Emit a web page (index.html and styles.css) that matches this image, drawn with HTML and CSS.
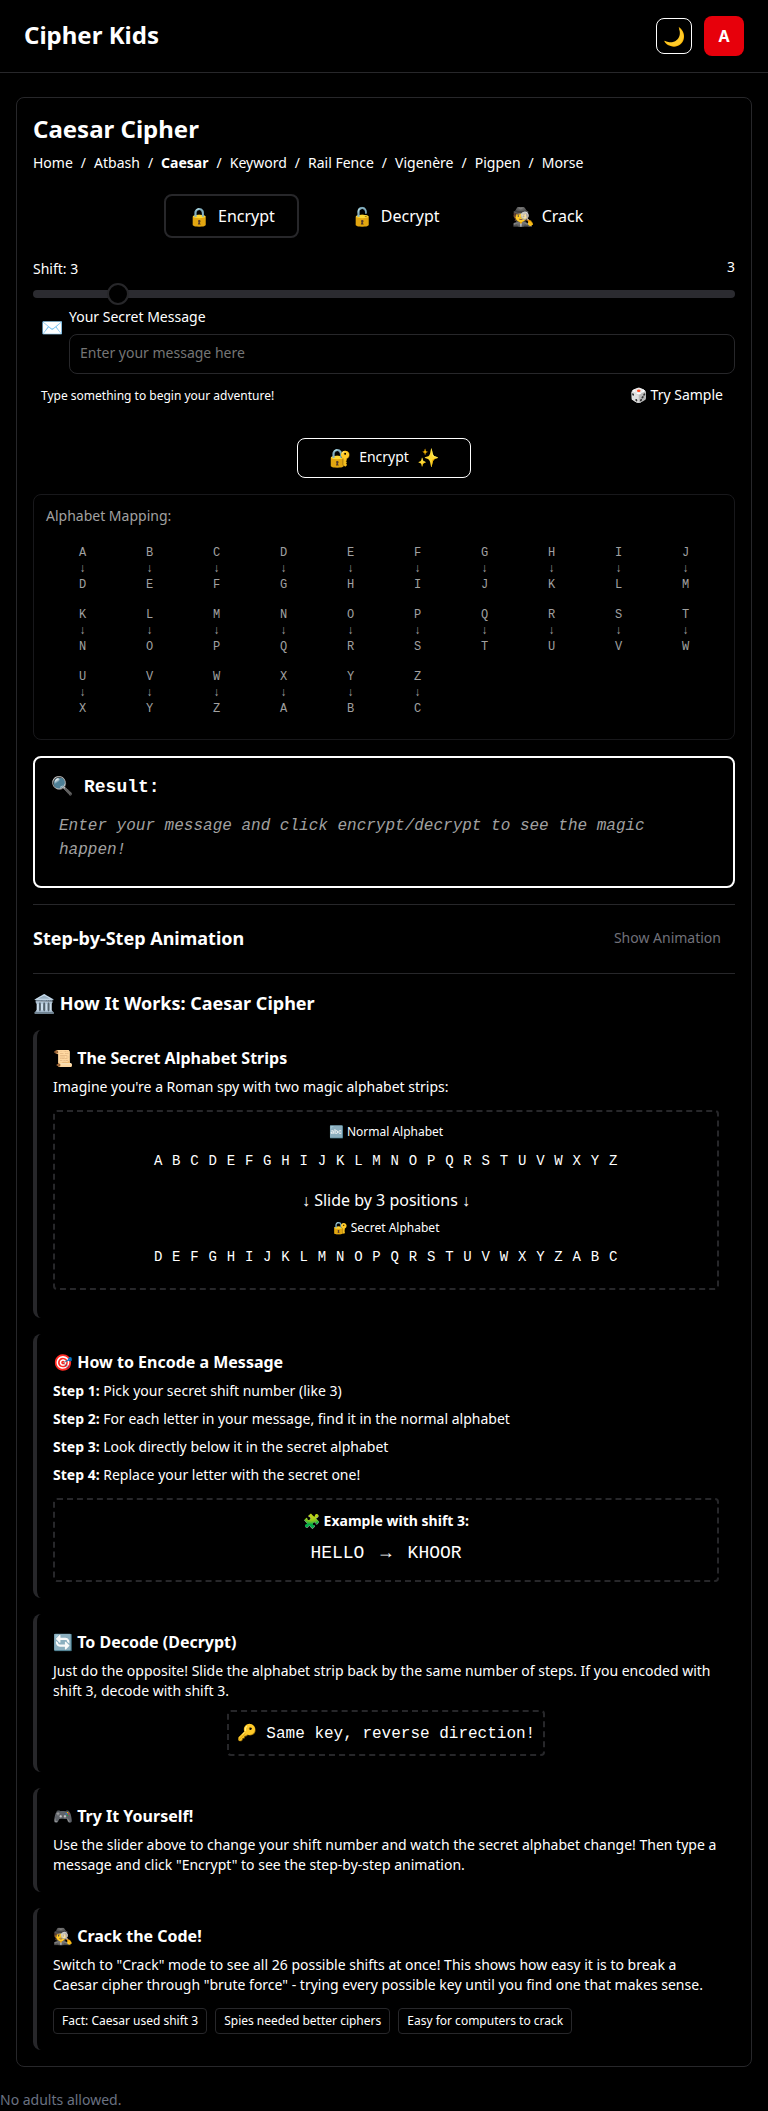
FILE: index.html
```html
<!DOCTYPE html>
<html lang="en">
<head>
<meta charset="utf-8">
<title>Cipher Kids</title>
<link rel="stylesheet" href="styles.css">
</head>
<body>
<header class="topbar">
  <div class="brand">Cipher Kids</div>
  <div class="topbar-actions">
    <button class="theme-toggle">🌙</button>
    <button class="avatar">A</button>
  </div>
</header>
<main class="card">
  <h1 class="title">Caesar Cipher</h1>
  <nav class="crumbs"><a>Home</a><i>/</i><a>Atbash</a><i>/</i><a class="current">Caesar</a><i>/</i><a>Keyword</a><i>/</i><a>Rail Fence</a><i>/</i><a>Vigenère</a><i>/</i><a>Pigpen</a><i>/</i><a>Morse</a></nav>
  <div class="modes">
    <button class="mode active"><span class="mode-icon">🔒</span>Encrypt</button>
    <button class="mode"><span class="mode-icon">🔓</span>Decrypt</button>
    <button class="mode"><span class="mode-icon">🕵️</span>Crack</button>
  </div>
  <div class="shift-head"><span class="shift-label">Shift: 3</span><span class="shift-value">3</span></div>
  <div class="track"><div class="thumb"></div></div>
  <div class="message">
    <span class="envelope">✉️</span>
    <div class="field">
      <label class="field-label" for="msg">Your Secret Message</label>
      <input class="input" id="msg" placeholder="Enter your message here">
    </div>
  </div>
  <div class="helper"><span>Type something to begin your adventure!</span><button class="sample">🎲 Try Sample</button></div>
  <button class="submit"><span class="submit-icon">🔐</span>Encrypt<span class="submit-icon">✨</span></button>
  <section class="mapping">
    <div class="mapping-label">Alphabet Mapping:</div>
    <div class="mapping-grid">
      <div>A<br>↓<br>D</div><div>B<br>↓<br>E</div><div>C<br>↓<br>F</div><div>D<br>↓<br>G</div><div>E<br>↓<br>H</div>
      <div>F<br>↓<br>I</div><div>G<br>↓<br>J</div><div>H<br>↓<br>K</div><div>I<br>↓<br>L</div><div>J<br>↓<br>M</div>
      <div>K<br>↓<br>N</div><div>L<br>↓<br>O</div><div>M<br>↓<br>P</div><div>N<br>↓<br>Q</div><div>O<br>↓<br>R</div>
      <div>P<br>↓<br>S</div><div>Q<br>↓<br>T</div><div>R<br>↓<br>U</div><div>S<br>↓<br>V</div><div>T<br>↓<br>W</div>
      <div>U<br>↓<br>X</div><div>V<br>↓<br>Y</div><div>W<br>↓<br>Z</div><div>X<br>↓<br>A</div><div>Y<br>↓<br>B</div>
      <div>Z<br>↓<br>C</div>
    </div>
  </section>
  <section class="result">
    <h2 class="result-title"><span class="result-icon">🔍</span>Result:</h2>
    <p class="result-text">Enter your message and click encrypt/decrypt to see the magic happen!</p>
  </section>
  <section class="animation"><h2 class="section-title">Step-by-Step Animation</h2><button class="show">Show Animation</button></section>
  <section class="how">
    <h2 class="section-title">🏛️ How It Works: Caesar Cipher</h2>
    <article class="lesson lesson-strips">
      <h3>📜 The Secret Alphabet Strips</h3>
      <p>Imagine you're a Roman spy with two magic alphabet strips:</p>
      <div class="dashed strips">
        <div class="strip-label">🔤 Normal Alphabet</div>
        <div class="strip">A B C D E F G H I J K L M N O P Q R S T U V W X Y Z</div>
        <div class="slide">↓ Slide by 3 positions ↓</div>
        <div class="strip-label">🔐 Secret Alphabet</div>
        <div class="strip">D E F G H I J K L M N O P Q R S T U V W X Y Z A B C</div>
      </div>
    </article>
    <article class="lesson">
      <h3>🎯 How to Encode a Message</h3>
      <p><b>Step 1:</b> Pick your secret shift number (like 3)</p>
      <p><b>Step 2:</b> For each letter in your message, find it in the normal alphabet</p>
      <p><b>Step 3:</b> Look directly below it in the secret alphabet</p>
      <p><b>Step 4:</b> Replace your letter with the secret one!</p>
      <div class="dashed example">
        <div class="example-title">🧩 Example with shift 3:</div>
        <div class="example-text">HELLO <span class="arrow">→</span> KHOOR</div>
      </div>
    </article>
    <article class="lesson">
      <h3>🔄 To Decode (Decrypt)</h3>
      <p>Just do the opposite! Slide the alphabet strip back by the same number of steps. If you encoded with shift 3, decode with shift 3.</p>
      <div class="dashed key">🔑 Same key, reverse direction!</div>
    </article>
    <article class="lesson">
      <h3>🎮 Try It Yourself!</h3>
      <p>Use the slider above to change your shift number and watch the secret alphabet change! Then type a message and click "Encrypt" to see the step-by-step animation.</p>
    </article>
    <article class="lesson">
      <h3>🕵️ Crack the Code!</h3>
      <p>Switch to "Crack" mode to see all 26 possible shifts at once! This shows how easy it is to break a Caesar cipher through "brute force" - trying every possible key until you find one that makes sense.</p>
      <div class="tags"><span>Fact: Caesar used shift 3</span><span>Spies needed better ciphers</span><span>Easy for computers to crack</span></div>
    </article>
  </section>
</main>
<footer class="footer">No adults allowed.</footer>
</body>
</html>
```

FILE: styles.css
```css
* { box-sizing: border-box; margin: 0; padding: 0; }
body { background: #000; color: #fff; font: 14px/20px "Noto Sans", sans-serif; }
button { background: none; border: 0; color: inherit; font: inherit; }
.topbar { display: flex; justify-content: space-between; align-items: center; height: 73px; padding: 0 24px; border-bottom: 1px solid #27272a; }
.brand { padding-bottom: 2px; font-size: 24px; line-height: 32px; font-weight: 700; }
.topbar-actions { display: flex; align-items: center; gap: 12px; }
.theme-toggle { width: 36px; height: 36px; border: 1px solid #fff; border-radius: 8px; font-size: 18px; }
.avatar { width: 40px; height: 40px; border-radius: 8px; background: #e7000b; font-size: 16px; font-weight: 700; }
.card { margin: 24px 16px 0; padding: 15px 16px 16px; border: 1px solid #27272a; border-radius: 8px; }
.title { font-size: 24px; line-height: 32px; font-weight: 700; }
.crumbs { display: flex; gap: 8px; margin-top: 8px; }
.crumbs i { font-style: normal; }
.crumbs .current { font-weight: 700; }
.modes { display: flex; gap: 24px; margin-top: 21px; padding-left: 131px; }
.mode { display: flex; align-items: center; gap: 8px; height: 44px; padding: 0 22px; border: 2px solid transparent; border-radius: 8px; font-size: 16px; line-height: 24px; }
.mode.active { margin-right: 4px; border-color: #27272a; }
.mode-icon { font-size: 18px; }
.shift-head { display: flex; justify-content: space-between; height: 33px; margin-top: 19px; }
.shift-label { padding-top: 2px; }
.track { display: flex; align-items: center; height: 8px; border-radius: 4px; background: #2b2b30; }
.thumb { flex: none; width: 22px; height: 22px; margin-left: 74px; border: 2px solid #27272a; border-radius: 50%; background: #000; }
.message { display: flex; margin-top: 9px; }
.envelope { width: 36px; padding: 10px 0 0 8px; font-size: 18px; }
.field { flex: 1; }
.field-label { display: block; }
.input { display: block; width: 100%; height: 40px; margin-top: 7px; padding: 0 10px 3px; border: 1px solid #27272a; border-radius: 8px; background: #000; color: #fff; font: inherit; }
.input::placeholder { color: #757575; }
.helper { display: flex; justify-content: space-between; align-items: center; height: 20px; margin-top: 12px; padding: 0 12px 0 8px; font-size: 12px; }
.sample { padding-bottom: 2px; font-size: 14px; }
.submit { display: flex; align-items: center; justify-content: center; gap: 8px; width: 174px; height: 40px; margin: 32px auto 0; padding-bottom: 2px; border: 1px solid #fff; border-radius: 8px; }
.submit-icon { font-size: 18px; }
.mapping { height: 246px; margin-top: 16px; padding: 11px 12px; border: 1px solid #18181b; border-radius: 8px; color: #a1a1a1; }
.mapping-grid { display: grid; grid-template-columns: repeat(10, 1fr); gap: 14px 8px; margin-top: 19px; padding: 0 7px; text-align: center; font: 12px/16px "Liberation Mono", monospace; }
.result { height: 132px; margin-top: 16px; padding: 16px; border: 2px solid #fff; border-radius: 8px; font-family: "Liberation Mono", monospace; }
.result-title { display: flex; align-items: center; gap: 11px; height: 24px; padding-top: 2px; font-size: 18px; line-height: 24px; }
.result-icon { font-size: 18px; }
.result-text { margin-top: 16px; padding: 0 8px; color: #a1a1a1; font-size: 16px; line-height: 24px; font-style: italic; }
.animation { display: flex; justify-content: space-between; align-items: center; height: 70px; margin-top: 16px; padding: 0 14px 2px 0; border: solid #27272a; border-width: 1px 0; }
.section-title { font-size: 18px; line-height: 28px; font-weight: 700; }
.show { color: #71717a; }
.how { display: flex; flex-direction: column; gap: 16px; padding-top: 15px; }
.how .section-title { margin-bottom: -3px; }
.lesson { display: flex; flex-direction: column; gap: 8px; padding: 16px; border-left: 4px solid #27272a; border-radius: 8px; }
.lesson-strips { padding-bottom: 28px; }
.lesson h3 { margin-bottom: -1px; font-size: 16px; line-height: 24px; font-weight: 700; }
.lesson p:last-child { margin-bottom: 1px; }
.dashed { border: 2px dashed #27272a; border-radius: 4px; text-align: center; }
.strips { height: 180px; margin-top: 5px; padding-top: 12px; }
.strip-label { font-size: 12px; line-height: 16px; }
.strip { padding: 11px 0 21px; font: 14px/20px "Liberation Mono", monospace; letter-spacing: .7px; }
.slide { margin: -4px 0 8px; font-size: 16px; line-height: 24px; }
.example { height: 84px; margin-top: 5px; padding-top: 11px; }
.example-title { font-weight: 700; }
.example-text { margin-top: 8px; font: 18px/28px "Liberation Mono", monospace; }
.arrow { margin: 0 5.4px; }
.key { align-self: center; height: 46px; margin-top: 1px; padding: 10px 8px; font: 16px/24px "Liberation Mono", monospace; }
.tags { display: flex; gap: 8px; margin-top: 5px; }
.tags span { padding: 4px 8px; border: 1px solid #27272a; border-radius: 4px; font-size: 12px; line-height: 16px; }
.footer { height: 44px; padding-top: 23px; color: #6a7282; }
```
